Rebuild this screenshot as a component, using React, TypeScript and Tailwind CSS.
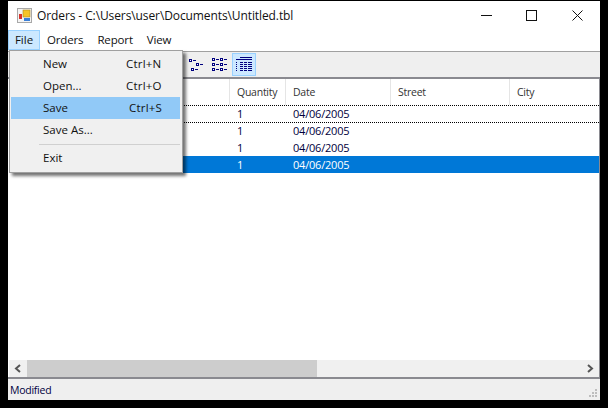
import React from 'react';

const columns = ['', 'Quantity', 'Date', 'Street', 'City'];
const rowCols = 'grid grid-cols-[221px_56px_105px_119px_1fr]';

function AppIcon() {
  return (
    <svg width="15" height="15" viewBox="0 0 15 15" className="shrink-0">
      <rect x="0.5" y="0.5" width="14" height="14" fill="#f4f4f4" stroke="#a8a8a8" />
      <rect x="6" y="2" width="7" height="7" fill="#f6c428" stroke="#b08a20" strokeWidth="0.6" />
      <rect x="2" y="6" width="3" height="5" fill="#d8322a" />
      <rect x="7" y="10" width="6" height="3" fill="#3a7fd8" />
    </svg>
  );
}

function Node({ x, y, dash = true }: { x: number; y: number; dash?: boolean }) {
  return (
    <>
      <rect x={x + 0.5} y={y + 0.5} width="2" height="2" fill="#fff" stroke="#00007f" />
      {dash && <rect x={x + 4} y={y + 1} width="3" height="1" fill="#00007f" />}
    </>
  );
}

function TreeIcon() {
  return (
    <svg width="17" height="15" viewBox="0 0 17 15">
      <Node x={0} y={2} />
      <Node x={7} y={6} />
      <Node x={2} y={11} />
    </svg>
  );
}

function ListIcon() {
  return (
    <svg width="17" height="15" viewBox="0 0 17 15">
      {[2, 7, 12].map((y) => (
        <g key={y}>
          <Node x={0} y={y - 1} />
          <Node x={8} y={y - 1} />
        </g>
      ))}
    </svg>
  );
}

function DetailIcon() {
  return (
    <svg width="17" height="15" viewBox="0 0 17 15">
      <rect x="4" y="0" width="12" height="1" fill="#00007f" />
      <rect x="0" y="2" width="16" height="1" fill="#00007f" />
      {[5, 7, 9, 11, 13].map((y) => (
        <g key={y}>
          <rect x="0" y={y} width="1" height="1" fill="#00007f" />
          <rect x="4" y={y} width="3" height="1" fill="#00007f" />
          <rect x="8" y={y} width="3" height="1" fill="#00007f" />
          <rect x="12" y={y} width="4" height="1" fill="#00007f" />
        </g>
      ))}
    </svg>
  );
}

function MenuItem({ label, shortcut, active }: { label: string; shortcut?: string; active?: boolean }) {
  return (
    <div className={`flex h-[22px] items-center pl-[32px] ${active ? 'bg-[#91c9f7]' : ''}`}>
      <span className="w-[83px]">{label}</span>
      {shortcut && <span className={`tracking-[0.2px] ${active ? 'ml-[3px]' : ''}`}>{shortcut}</span>}
    </div>
  );
}

function Row({ selected, dotted }: { selected?: boolean; dotted?: boolean }) {
  return (
    <div
      className={`${rowCols} h-[17px] items-center border-t border-dotted pb-px text-[11px] tracking-[-0.2px] ${
        selected ? 'border-[#0078d7] bg-[#0078d7] text-white' : dotted ? 'border-black' : 'border-transparent'
      }`}
    >
      <span />
      <span className={`pl-[7px] ${selected ? '' : 'text-[#00003c]'}`}>1</span>
      <span className={`pl-[7px] ${selected ? '' : 'text-[#00003c]'}`}>04/06/2005</span>
    </div>
  );
}

export default function App() {
  return (
    <div className="h-[408px] w-[608px] bg-black pt-px pl-2 pr-2 pb-2 font-['Open_Sans','Noto_Sans',sans-serif] text-[11.5px] text-[#111] overflow-hidden">
      <div className="relative flex h-[399px] w-[592px] flex-col bg-white">
        <div className="flex h-[29px] shrink-0 items-center pl-[9px]">
          <AppIcon />
          <span className="ml-[5px] text-[12px] tracking-[-0.1px]">Orders - C:\Users\user\Documents\Untitled.tbl</span>
          <div className="ml-auto flex items-center gap-[34px] pr-[17px]">
            <svg width="11" height="11" viewBox="0 0 11 11"><rect y="5" width="11" height="1" fill="#111" /></svg>
            <svg width="11" height="11" viewBox="0 0 11 11"><rect x="0.5" y="0.5" width="10" height="10" fill="none" stroke="#111" /></svg>
            <svg width="11" height="11" viewBox="0 0 11 11" className="ml-px"><path d="M0.5 0.5 L10.5 10.5 M10.5 0.5 L0.5 10.5" stroke="#111" /></svg>
          </div>
        </div>

        <div className="flex h-[21px] shrink-0 items-start gap-[1px] bg-white">
          <div className="flex h-[20px] w-[32px] items-center justify-center border border-[#99d1ff] bg-[#cce8ff]">File</div>
          <div className="flex h-[20px] items-center gap-[14px] pl-[6px] tracking-[-0.15px]">
            <span>Orders</span>
            <span>Report</span>
            <span>View</span>
          </div>
        </div>

        <div className="flex h-[28px] shrink-0 items-center border-t border-b-2 border-t-[#a0a0a0] border-b-[#8a8a90] bg-[#efefef] pl-[181px]">
          <div className="flex h-[23px] w-[17px] items-center"><TreeIcon /></div>
          <div className="ml-[6px] flex h-[23px] w-[17px] items-center"><ListIcon /></div>
          <div className="ml-[3px] flex h-[23px] w-[24px] items-center justify-center border border-[#99d1ff] bg-[#cce8ff]"><DetailIcon /></div>
        </div>

        <div className="flex min-h-0 flex-1 flex-col border-r border-[#8a8a90] pl-px">
          <div className={`${rowCols} h-[26px] shrink-0 text-[10.5px] tracking-[-0.25px] text-[#333]`}>
            {columns.map((c, i) => (
              <div key={i} className="flex items-center border-r border-[#e5e5e5] pl-[7px] pt-[2px] last:border-r-0">{c}</div>
            ))}
          </div>
          <Row dotted />
          <Row dotted />
          <Row />
          <Row selected />
          <div className="flex-1" />
          <div className="flex h-[17px] shrink-0 bg-[#f0f0f0]">
            <div className="flex w-[18px] items-center justify-center">
              <svg width="8" height="9" viewBox="0 0 8 9"><path d="M6 1 L2 4.5 L6 8" fill="none" stroke="#555" strokeWidth="2" /></svg>
            </div>
            <div className="w-[290px] bg-[#cdcdcd]" />
            <div className="flex-1" />
            <div className="flex w-[18px] items-center justify-center">
              <svg width="8" height="9" viewBox="0 0 8 9"><path d="M2 1 L6 4.5 L2 8" fill="none" stroke="#555" strokeWidth="2" /></svg>
            </div>
          </div>
        </div>

        <div className="relative flex h-[23px] shrink-0 items-center border-t-2 border-[#8a8a90] bg-[#efefef] pl-[2px] pt-[3px] text-[10.5px] tracking-[-0.25px] text-[#00003c]">
          Modified
          <svg width="9" height="9" viewBox="0 0 9 9" className="absolute right-[2px] bottom-[2px]">
            {[[6, 0], [3, 3], [6, 3], [0, 6], [3, 6], [6, 6]].map(([x, y]) => (
              <rect key={`${x}-${y}`} x={x} y={y} width="2" height="2" fill="#bdbdbd" />
            ))}
          </svg>
        </div>

        <div className="absolute top-[49px] left-px h-[123px] w-[174px] border border-[#a0a0a0] bg-[#f0f0f0] py-[2px] pl-[1px] pr-[2px] shadow-[3px_3px_3px_rgba(0,0,0,0.55)]">
          <MenuItem label="New" shortcut="Ctrl+N" />
          <MenuItem label="Open..." shortcut="Ctrl+O" />
          <MenuItem label="Save" shortcut="Ctrl+S" active />
          <MenuItem label="Save As..." />
          <div className="mt-[3px] mb-[2px] ml-[28px] h-px bg-[#d0d0d0]" />
          <MenuItem label="Exit" />
        </div>
      </div>
    </div>
  );
}
